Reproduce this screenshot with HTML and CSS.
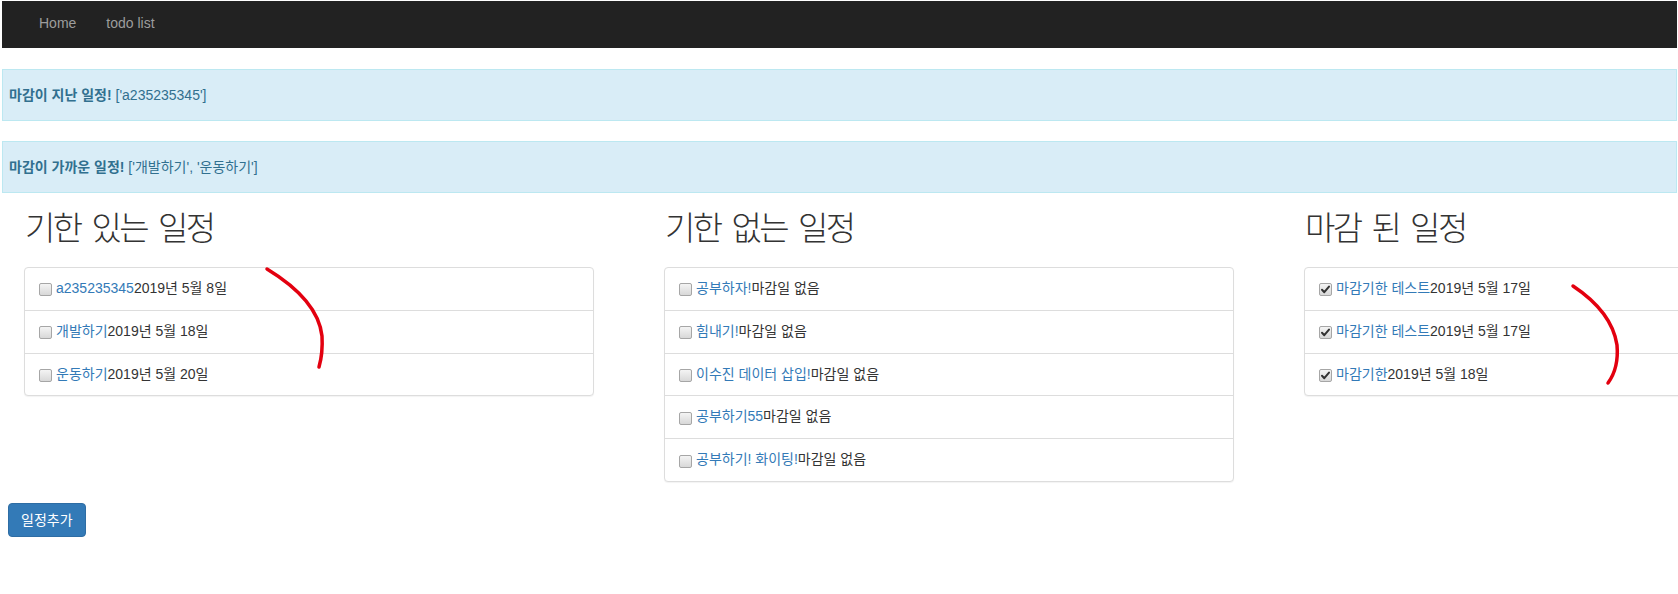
FILE: index.html
```html
<!DOCTYPE html>
<html lang="ko">
<head>
<meta charset="utf-8">
<title>todo list</title>
<link rel="stylesheet" href="styles.css">
</head>
<body>
<div class="page">
  <nav class="navbar">
    <a class="nav-link" href="#">Home</a>
    <a class="nav-link" href="#">todo list</a>
  </nav>

  <div class="alerts">
    <div class="alert"><strong>마감이 지난 일정!</strong> ['a235235345']</div>
    <div class="alert"><strong>마감이 가까운 일정!</strong> ['개발하기', '운동하기']</div>
  </div>

  <div class="columns">
    <section class="column">
      <h2 class="col-title">기한 있는 일정</h2>
      <ul class="list">
        <li class="item"><span class="cb"></span><a href="#">a235235345</a>2019년 5월 8일</li>
        <li class="item"><span class="cb"></span><a href="#">개발하기</a>2019년 5월 18일</li>
        <li class="item"><span class="cb"></span><a href="#">운동하기</a>2019년 5월 20일</li>
      </ul>
    </section>
    <section class="column">
      <h2 class="col-title">기한 없는 일정</h2>
      <ul class="list">
        <li class="item"><span class="cb"></span><a href="#">공부하자!</a>마감일 없음</li>
        <li class="item"><span class="cb"></span><a href="#">힘내기!</a>마감일 없음</li>
        <li class="item"><span class="cb"></span><a href="#">이수진 데이터 삽입!</a>마감일 없음</li>
        <li class="item"><span class="cb"></span><a href="#">공부하기55</a>마감일 없음</li>
        <li class="item"><span class="cb"></span><a href="#">공부하기! 화이팅!</a>마감일 없음</li>
      </ul>
    </section>
    <section class="column">
      <h2 class="col-title">마감 된 일정</h2>
      <ul class="list">
        <li class="item"><span class="cb checked"><svg viewBox="0 0 13 13" width="13" height="13"><path d="M3 6.8 L5.3 9.2 L10 3.6" fill="none" stroke="#333" stroke-width="2" stroke-linecap="round" stroke-linejoin="round"/></svg></span><a href="#">마감기한 테스트</a>2019년 5월 17일</li>
        <li class="item"><span class="cb checked"><svg viewBox="0 0 13 13" width="13" height="13"><path d="M3 6.8 L5.3 9.2 L10 3.6" fill="none" stroke="#333" stroke-width="2" stroke-linecap="round" stroke-linejoin="round"/></svg></span><a href="#">마감기한 테스트</a>2019년 5월 17일</li>
        <li class="item"><span class="cb checked"><svg viewBox="0 0 13 13" width="13" height="13"><path d="M3 6.8 L5.3 9.2 L10 3.6" fill="none" stroke="#333" stroke-width="2" stroke-linecap="round" stroke-linejoin="round"/></svg></span><a href="#">마감기한</a>2019년 5월 18일</li>
      </ul>
    </section>
  </div>

  <button class="btn" type="button">일정추가</button>
</div>

<svg class="marks" viewBox="0 0 1678 594" width="1678" height="594">
  <path d="M267 269 Q 318 300 322 336 Q 323 353 319 367" fill="none" stroke="#e3000f" stroke-width="3.5" stroke-linecap="round"/>
  <path d="M1573 286 Q 1612 312 1617 345 Q 1619 368 1608 383" fill="none" stroke="#e3000f" stroke-width="3.5" stroke-linecap="round"/>
</svg>
</body>
</html>
```

FILE: styles.css
```css
html, body {
  margin: 0;
  overflow: hidden;
  background: #fff;
}

body {
  font-family: "Liberation Sans", "Noto Sans CJK KR", sans-serif;
  font-size: 14px;
  line-height: 20px;
  color: #333;
  position: relative;
  width: 1678px;
  height: 594px;
}

.page {
  padding: 1px 1px 0 2px;
}

a {
  color: #337ab7;
  text-decoration: none;
}

/* navbar */
.navbar {
  display: flex;
  height: 47px;
  background: #222;
  padding: 0 22px;
  margin-bottom: 21px;
}

.nav-link {
  color: #9d9d9d;
  padding: 0 15px;
  line-height: 45px;
}

/* alerts */
.alerts {
  display: flex;
  flex-direction: column;
  gap: 20px;
}

.alert {
  background: #d9edf7;
  border: 1px solid #bce8f1;
  color: #31708f;
  padding: 15px 6px;
  line-height: 20px;
}

.alert strong {
  font-weight: 700;
}

/* columns */
.columns {
  display: flex;
  align-items: flex-start;
  gap: 70px;
  padding-left: 22px;
  margin-top: 13px;
}

.column {
  flex: 0 0 570px;
  width: 570px;
}

.col-title {
  margin: 0 0 21px;
  font-family: "Noto Sans CJK KR", sans-serif;
  font-size: 33px;
  font-weight: 300;
  line-height: 40px;
  letter-spacing: -2.5px;
  word-spacing: 4px;
  color: #333;
  padding-left: 1px;
}

.list {
  list-style: none;
  margin: 0;
  padding: 0;
  border: 1px solid #ddd;
  border-radius: 4px;
  box-shadow: 0 1px 1px rgba(0, 0, 0, 0.05);
  background: #fff;
}

.item {
  padding: 10px 14px;
  line-height: 21.8px;
  border-top: 1px solid #ddd;
  display: flex;
  align-items: center;
}

.item:first-child {
  border-top: none;
}

.cb {
  flex: 0 0 13px;
  width: 13px;
  height: 13px;
  box-sizing: border-box;
  border: 1px solid #a6a6a6;
  border-radius: 2px;
  background: linear-gradient(#f4f4f4, #d8d8d8);
  margin-right: 4px;
  position: relative;
  top: 1px;
}

.cb svg {
  display: block;
  margin: -1px;
}

/* button */
.btn {
  display: block;
  margin: 21px 0 0 6px;
  padding: 6px 12px;
  font-family: "Liberation Sans", "Noto Sans CJK KR", sans-serif;
  font-size: 14px;
  line-height: 20px;
  color: #fff;
  background: #337ab7;
  border: 1px solid #2e6da4;
  border-radius: 4px;
}

/* hand-drawn annotation overlay */
.marks {
  position: absolute;
  left: 0;
  top: 0;
  pointer-events: none;
}
```
